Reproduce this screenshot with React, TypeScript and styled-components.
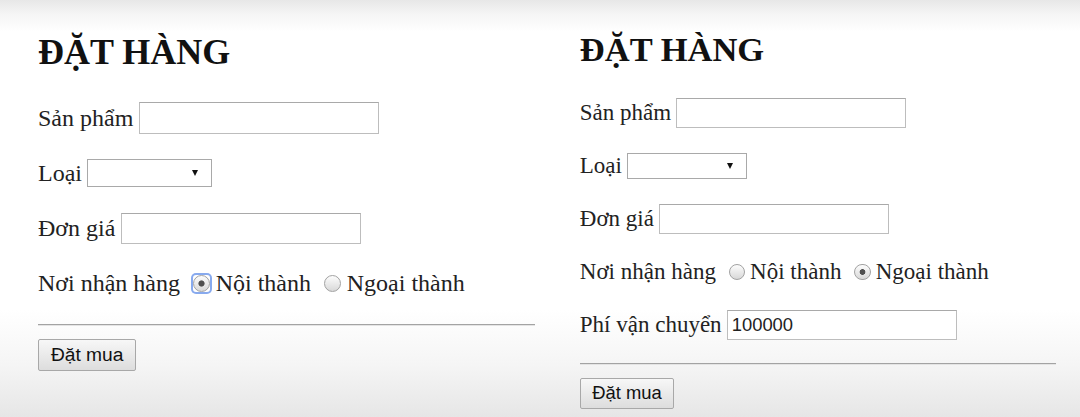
import React, { useState } from "react";
import styled, { createGlobalStyle } from "styled-components";

type Place = "noi" | "ngoai";

const GlobalStyle = createGlobalStyle`
  html, body {
    margin: 0;
    padding: 0;
    height: 100%;
  }
  body {
    background: linear-gradient(
      to bottom,
      #e7e7e7 0px,
      #f5f5f5 14px,
      #ffffff 32px,
      #ffffff 310px,
      #f5f5f5 365px,
      #e6e6e6 417px
    );
    font-family: "Liberation Serif", "Times New Roman", serif;
    color: #222;
  }
`;

const Page = styled.div`
  display: flex;
  align-items: flex-start;
  gap: 45px;
  padding-left: 38px;
`;

const Panel = styled.div<{ $fs: number }>`
  font-size: ${(p) => p.$fs}px;
  width: 20.7em;
  padding-top: 1.41em;
`;

const Title = styled.h1`
  margin: 0 0 0.907em;
  font-size: 1.5em;
  line-height: 1;
  font-weight: bold;
  color: #111;
`;

const Fields = styled.div`
  display: flex;
  flex-direction: column;
  gap: 1em;
`;

const Row = styled.div`
  display: flex;
  align-items: center;
  height: 1.3em;
  gap: 0.22em;
  white-space: nowrap;
`;

const TextInput = styled.input`
  box-sizing: border-box;
  width: 12.5em;
  height: 1.625em;
  margin: 0;
  padding: 0 0.22em;
  border: 1px solid #bdbdbd;
  border-top-color: #a9a9a9;
  background: #fff;
  font-family: "Liberation Sans", Arial, sans-serif;
  font-size: 0.8em;
  color: #222;
  outline: none;
`;

const SelectWrap = styled.span`
  position: relative;
  display: inline-flex;

  &::after {
    content: "";
    position: absolute;
    right: 0.6em;
    top: 50%;
    margin-top: -0.13em;
    border-left: 0.15em solid transparent;
    border-right: 0.15em solid transparent;
    border-top: 0.27em solid #111;
    pointer-events: none;
  }
`;

const Select = styled.select`
  appearance: none;
  box-sizing: border-box;
  width: 5.2em;
  height: 1.15em;
  margin: 0;
  padding: 0 0.2em;
  border: 1px solid #a9a9a9;
  border-radius: 0;
  background: #fff;
  font-family: "Liberation Sans", Arial, sans-serif;
  font-size: 1em;
  outline: none;
`;

const RadioWrap = styled.span<{ $focused: boolean }>`
  display: inline-flex;
  margin-left: 0.33em;
  border-radius: 3px;
  box-shadow: ${(p) => (p.$focused ? "0 0 0 2px #88aaee" : "none")};
`;

const Radio = styled.input`
  appearance: none;
  box-sizing: border-box;
  width: 0.72em;
  height: 0.72em;
  margin: 0;
  border: 1px solid #a2a2a2;
  border-radius: 50%;
  background: linear-gradient(#fdfdfd, #d8d8d8);
  font-size: inherit;
  outline: none;

  &:checked {
    background: radial-gradient(circle closest-side, #505050 0 36%, transparent 46%),
      linear-gradient(#fdfdfd, #d8d8d8);
  }
`;

const Divider = styled.hr`
  height: 0;
  margin: 1.03em 0 0.55em;
  border: 0;
  border-top: 1px solid #a3a3a3;
  border-bottom: 1px solid #e4e4e4;
`;

const SubmitButton = styled.button`
  display: block;
  box-sizing: border-box;
  height: 1.66em;
  margin: 0;
  padding: 0 0.62em;
  border: 1px solid #a8a8a8;
  border-radius: 2px;
  background: linear-gradient(#f7f7f7, #dddddd);
  font-family: "Liberation Sans", Arial, sans-serif;
  font-size: 0.8em;
  color: #111;
`;

interface OrderFormProps {
  fs: number;
  initialPlace: Place;
  focused?: Place;
  shippingFee: string;
}

const places: { value: Place; label: string }[] = [
  { value: "noi", label: "Nội thành" },
  { value: "ngoai", label: "Ngoại thành" },
];

const OrderForm: React.FC<OrderFormProps> = ({ fs, initialPlace, focused, shippingFee }) => {
  const [place, setPlace] = useState<Place>(initialPlace);
  const [fee, setFee] = useState(shippingFee);
  const name = `noi-nhan-${fs}`;

  return (
    <Panel $fs={fs}>
      <Title>ĐẶT HÀNG</Title>
      <form onSubmit={(e) => e.preventDefault()}>
        <Fields>
          <Row>
            Sản phẩm
            <TextInput type="text" />
          </Row>
          <Row>
            Loại
            <SelectWrap>
              <Select defaultValue="">
                <option value=""></option>
                <option value="a">Loại A</option>
                <option value="b">Loại B</option>
              </Select>
            </SelectWrap>
          </Row>
          <Row>
            Đơn giá
            <TextInput type="text" />
          </Row>
          <Row>
            Nơi nhận hàng
            {places.map((p) => (
              <React.Fragment key={p.value}>
                <RadioWrap $focused={focused === p.value}>
                  <Radio
                    type="radio"
                    name={name}
                    checked={place === p.value}
                    onChange={() => setPlace(p.value)}
                  />
                </RadioWrap>
                {p.label}
              </React.Fragment>
            ))}
          </Row>
          {place === "ngoai" && (
            <Row>
              Phí vận chuyển
              <TextInput type="text" value={fee} onChange={(e) => setFee(e.target.value)} />
            </Row>
          )}
        </Fields>
        <Divider />
        <SubmitButton type="submit">Đặt mua</SubmitButton>
      </form>
    </Panel>
  );
};

export default function App() {
  return (
    <>
      <GlobalStyle />
      <Page>
        <OrderForm fs={24} initialPlace="noi" focused="noi" shippingFee="100000" />
        <OrderForm fs={23} initialPlace="ngoai" shippingFee="100000" />
      </Page>
    </>
  );
}
